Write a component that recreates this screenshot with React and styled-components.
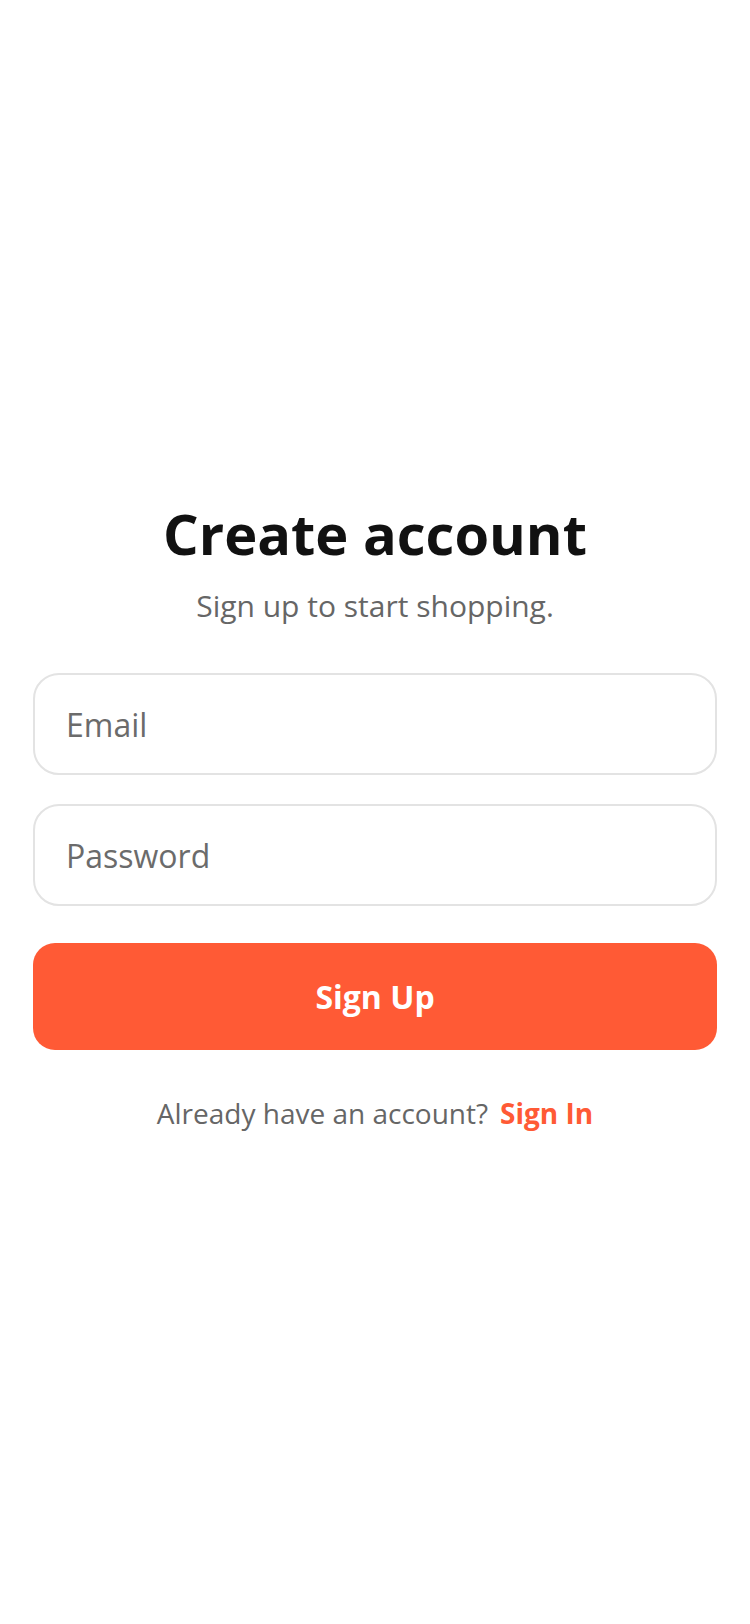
import styled, { createGlobalStyle } from "styled-components";

const GlobalStyle = createGlobalStyle`
  * {
    box-sizing: border-box;
  }
  html, body {
    margin: 0;
    padding: 0;
    background: #ffffff;
    font-family: "Open Sans", "Noto Sans", sans-serif;
  }
`;

const App = () => {
  return (
    <>
      <GlobalStyle />
      <Page>
        <Form onSubmit={(e) => e.preventDefault()}>
          <Title>Create account</Title>
          <Subtitle>Sign up to start shopping.</Subtitle>

          <Fields>
            <Input type="email" placeholder="Email" />
            <Input type="password" placeholder="Password" />
          </Fields>

          <SubmitButton type="submit">Sign Up</SubmitButton>

          <Footer>
            <span>Already have an account?</span>
            <FooterLink href="#">Sign In</FooterLink>
          </Footer>
        </Form>
      </Page>
    </>
  );
};

export default App;

const Page = styled.main`
  min-height: 100vh;
  display: flex;
  align-items: center;
  justify-content: center;
  padding: 8px 33px 0;
`;

const Form = styled.form`
  width: 100%;
  display: flex;
  flex-direction: column;
  align-items: stretch;
`;

const Title = styled.h1`
  margin: 0;
  text-align: center;
  font-size: 56px;
  font-weight: 700;
  line-height: 1.2;
  color: #111111;
`;

const Subtitle = styled.p`
  margin: 18px 0 0;
  text-align: center;
  font-size: 30px;
  line-height: 1.4;
  color: #666666;
`;

const Fields = styled.div`
  margin-top: 46px;
  display: grid;
  gap: 29px;
`;

const Input = styled.input`
  width: 100%;
  height: 102px;
  padding: 0 31px;
  border: 2px solid #e3e3e3;
  border-radius: 26px;
  background: #ffffff;
  font-family: inherit;
  font-size: 32px;
  color: #222222;
  outline: none;

  &::placeholder {
    color: #6b6b6b;
  }
`;

const SubmitButton = styled.button`
  margin-top: 37px;
  height: 107px;
  border: none;
  border-radius: 22px;
  background: #ff5a35;
  color: #ffffff;
  font-family: inherit;
  font-size: 32px;
  font-weight: 700;
  cursor: pointer;
`;

const Footer = styled.p`
  margin: 44px 0 0;
  display: flex;
  justify-content: center;
  gap: 12px;
  font-size: 28px;
  color: #666666;
`;

const FooterLink = styled.a`
  color: #ff5a35;
  font-weight: 700;
  text-decoration: none;
`;
